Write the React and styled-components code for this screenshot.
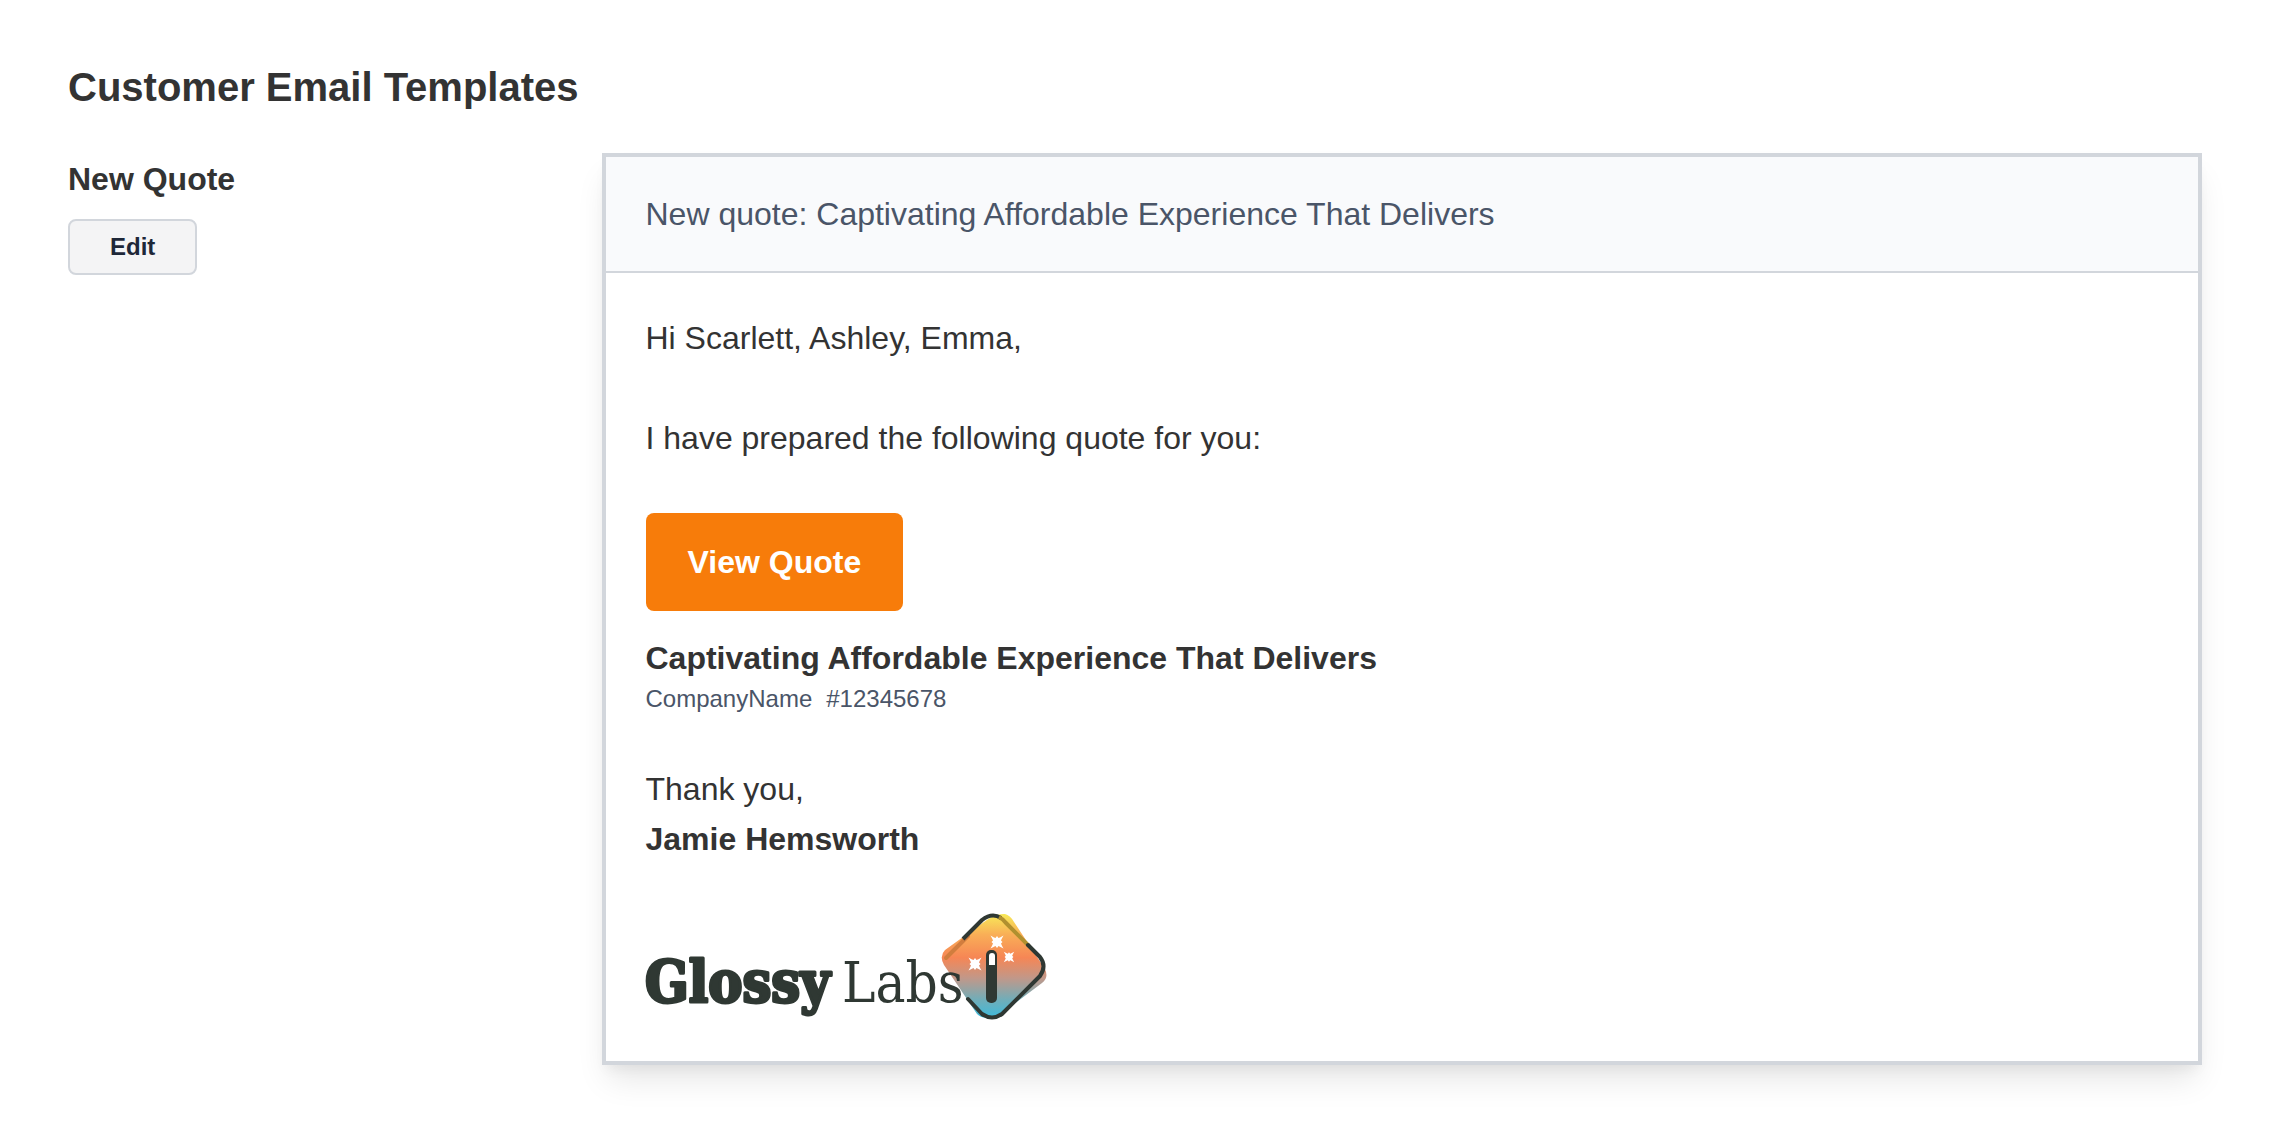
import React from 'react';
import styled, { createGlobalStyle } from 'styled-components';

const GlobalStyle = createGlobalStyle`
    * {
        box-sizing: border-box;
    }
    body {
        margin: 0;
        background: white;
        color: #333333;
        font-family: "Helvetica Neue", "Liberation Sans", Arial, sans-serif;
        font-size: 32px;
        line-height: 50px;
    }
`;

const Page = styled.main`
    padding: 61px 78px 76px 68px;
`;

const PageTitle = styled.h1`
    margin: 0 0 40px;
    font-size: 40px;
    line-height: 52px;
`;

const TemplateRow = styled.section`
    display: grid;
    grid-template-columns: 1fr 3fr;
    align-items: start;
`;

const TemplateName = styled.h2`
    margin: 0 0 14px;
    font-size: 32px;
    line-height: 52px;
`;

const EditButton = styled.button`
    height: 56px;
    padding: 0 40px;
    background: #f4f4f5;
    border: 2px solid #d2d6dc;
    border-radius: 8px;
    color: #1e2738;
    font-family: inherit;
    font-size: 24px;
    font-weight: bold;
    cursor: pointer;
`;

const Preview = styled.article`
    background: white;
    border: 4px solid #d2d6dc;
    box-shadow: 0 20px 30px -6px rgba(0, 0, 0, 0.1), 0 8px 12px -4px rgba(0, 0, 0, 0.05);
`;

const Subject = styled.header`
    padding: 32px 40px;
    background: #f9fafc;
    border-bottom: 2px solid #d2d6dc;
    color: #4a5568;
`;

const Message = styled.div`
    padding: 40px;
`;

const Paragraph = styled.p`
    margin: 0 0 50px;
`;

const QuoteLink = styled.a`
    display: inline-block;
    margin-bottom: 23px;
    padding: 24px 42px;
    background: #f77c0a;
    border-radius: 8px;
    color: white;
    font-weight: bold;
    text-decoration: none;
    vertical-align: top;
`;

const QuoteTitle = styled.h3`
    margin: 0;
    font-size: 32px;
    line-height: 48px;
`;

const QuoteMeta = styled.p`
    display: flex;
    gap: 14px;
    margin: 0 0 48px;
    color: #4a5568;
    font-size: 24px;
    line-height: 34px;
`;

const Logo = styled.svg`
    display: block;
    width: 402px;
    height: 107px;
    overflow: visible;
`;

const Wordmark = styled.text`
    fill: #2f3833;
    stroke: #2f3833;
    stroke-width: ${props => props.$stroke}px;
    stroke-linejoin: round;
    font-family: "DejaVu Serif Condensed", "DejaVu Serif", serif;
    font-size: ${props => props.$size}px;
    font-weight: ${props => props.$weight};
    font-stretch: condensed;
`;

const star = 'M-6.5 -6.5 Q-3 -4.5 -1.5 -4 L0 -6 L1.5 -4 Q3 -4.5 6.5 -6.5 Q4.5 -3 4 -1.5 L5.5 0 L4 1.5 Q4.5 3 6.5 6.5 Q3 4.5 1.5 4 L0 6 L-1.5 4 Q-3 4.5 -6.5 6.5 Q-4.5 3 -4 1.5 L-5.5 0 L-4 -1.5 Q-4.5 -3 -6.5 -6.5 Z';

const GlossyLogo = () => {
    return (
        <Logo viewBox="0 0 402 107" role="img" aria-label="Glossy Labs">
            <defs>
                <linearGradient id="sunset" x1="0" y1="0" x2="0" y2="1">
                    <stop offset="0" stopColor="#f8ea58" />
                    <stop offset="0.2" stopColor="#f9ae57" />
                    <stop offset="0.42" stopColor="#f68655" />
                    <stop offset="0.62" stopColor="#c0988a" />
                    <stop offset="0.82" stopColor="#72adb8" />
                    <stop offset="1" stopColor="#3dbbdc" />
                </linearGradient>
            </defs>
            <path
                fill="url(#sunset)"
                d="M299 36 L338 8 Q350 -1 359 0 Q364 1 368 8 L399 55 Q403 64 396 69 L352 102 Q338 107 331 100 L298 51 Q293 42 299 36 Z"
            />
            <g fill="none" stroke="#2f3833" strokeWidth="4" strokeLinecap="round" strokeLinejoin="round">
                <path stroke="#d17d3e" d="M300 44 L322 22" />
                <path strokeLinecap="butt" d="M317 25 L336 6 Q346 -2 355 4" />
                <path stroke="#b1902f" strokeLinecap="butt" d="M353 3 Q357 5 360 9 L383 32" />
                <path d="M382 31 L394 43 Q401 52 394 62 L356 100 Q346 107 336 100 L322 85" />
            </g>
            <rect x="340" y="36" width="11" height="53" rx="5" fill="#2f3833" />
            <path fill="white" d="M343 51 V42 Q343 39 346 39 Q349 39 349 42 V51 Z" />
            <g fill="white">
                <path d={star} transform="translate(351 28)" />
                <path d={star} transform="translate(329 50)" />
                <path d={star} transform="translate(363 43) scale(0.8)" />
            </g>
            <Wordmark x="-1" y="88" $size={57} $weight="bold" $stroke={3}>Glossy</Wordmark>
            <Wordmark x="196" y="88" $size={56} $weight="normal" $stroke={0}>Labs</Wordmark>
        </Logo>
    )
}

const App = () => {
    return (
        <>
            <GlobalStyle />
            <Page>
                <PageTitle>Customer Email Templates</PageTitle>
                <TemplateRow>
                    <div>
                        <TemplateName>New Quote</TemplateName>
                        <EditButton type="button">Edit</EditButton>
                    </div>
                    <Preview>
                        <Subject>New quote: Captivating Affordable Experience That Delivers</Subject>
                        <Message>
                            <Paragraph>Hi Scarlett, Ashley, Emma,</Paragraph>
                            <Paragraph>I have prepared the following quote for you:</Paragraph>
                            <QuoteLink href="#quote">View Quote</QuoteLink>
                            <QuoteTitle>Captivating Affordable Experience That Delivers</QuoteTitle>
                            <QuoteMeta>
                                <span>CompanyName</span>
                                <span>#12345678</span>
                            </QuoteMeta>
                            <Paragraph>
                                Thank you,
                                <br />
                                <strong>Jamie Hemsworth</strong>
                            </Paragraph>
                            <GlossyLogo />
                        </Message>
                    </Preview>
                </TemplateRow>
            </Page>
        </>
    )
}

export default App;
